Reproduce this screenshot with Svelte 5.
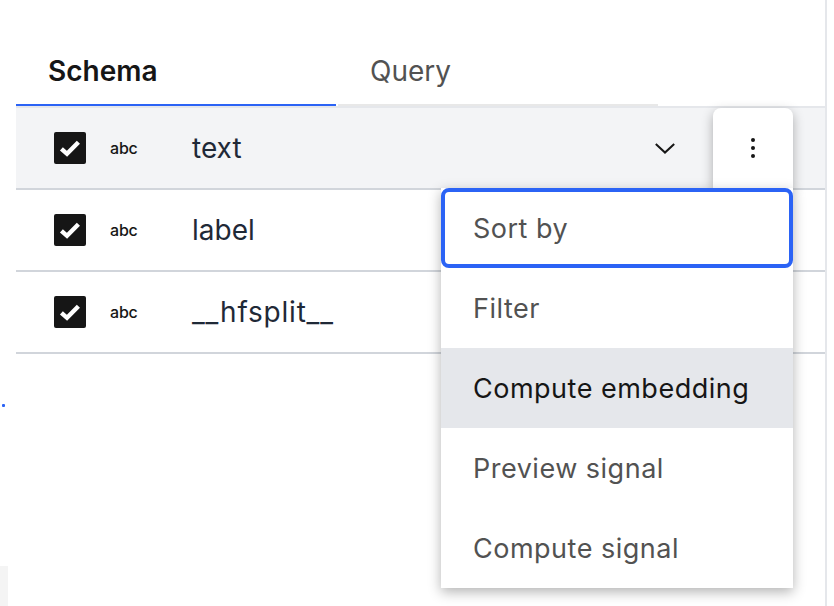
<script lang="ts">
  const rows = ['text', 'label', '__hfsplit__'];
  const menuItems = ['Sort by', 'Filter', 'Compute embedding', 'Preview signal', 'Compute signal'];
  const focused = 'Sort by';
  const hovered = 'Compute embedding';
</script>

<div class="page">
  <span class="stray-dot"></span>
  <span class="corner"></span>
  <div class="panel">
    <div class="tabs">
      <div class="tab active">Schema</div>
      <div class="tab">Query</div>
    </div>

    <div class="rows">
      {#each rows as name, i}
        <div class="row" class:open={i === 0}>
          <span class="checkbox">
            <svg viewBox="0 0 32 32" width="32" height="32">
              <path d="M7.4 16.8l5.6 5 11.4-11.6" fill="none" stroke="#fff" stroke-width="4.4" />
            </svg>
          </span>
          <span class="type">abc</span>
          <span class="name" class:dunder={name.startsWith('__')}>{name}</span>
          {#if i === 0}
            <svg class="chevron" viewBox="0 0 20 11" width="20" height="11">
              <path d="M.8 1l9.2 8.6L19.200 1" fill="none" stroke="#161616" stroke-width="2" />
            </svg>
          {/if}
        </div>
      {/each}

      <div class="overflow">
        <button class="trigger" aria-label="Options">
          <svg viewBox="0 0 6 22" width="6" height="22">
            <circle cx="3" cy="3" r="2" fill="#161616" />
            <circle cx="3" cy="11" r="2" fill="#161616" />
            <circle cx="3" cy="19" r="2" fill="#161616" />
          </svg>
        </button>
        <ul class="menu">
          {#each menuItems as item}
            <li class:focused={item === focused} class:hovered={item === hovered}>{item}</li>
          {/each}
        </ul>
      </div>
    </div>
  </div>
</div>

<style>
  :global(body) {
    background: #fff;
    overflow: hidden;
  }
  .page {
    position: relative;
    width: 834px;
    height: 606px;
    box-sizing: border-box;
    padding: 40px 9px 0 16px;
    overflow: hidden;
    font-family: Inter, "Liberation Sans", sans-serif;
    color: #161616;
  }
  .page::after {
    content: '';
    position: absolute;
    top: 0;
    right: 7px;
    bottom: 0;
    width: 2px;
    background: #e5e7eb;
  }
  .stray-dot {
    position: absolute;
    left: 2px;
    top: 404px;
    width: 3px;
    height: 3px;
    border-radius: 1px;
    background: #2b63f5;
  }
  .corner {
    position: absolute;
    left: 0;
    top: 566px;
    width: 8px;
    height: 40px;
    background: #f4f4f4;
  }
  .tabs {
    display: flex;
    gap: 2px;
    height: 66px;
  }
  .tab {
    width: 320px;
    box-sizing: border-box;
    padding: 13px 32px 0;
    height: 66px;
    font-size: 28px;
    line-height: 36px;
    color: #525252;
    border-bottom: 2px solid #e8e8e8;
  }
  .tab.active {
    color: #161616;
    font-weight: 600;
    border-bottom-color: #2b63f5;
  }
  .rows {
    position: relative;
    border-top: 2px solid #e5e7eb;
  }
  .row {
    display: flex;
    align-items: center;
    height: 82px;
    box-sizing: border-box;
    padding: 0 150px 0 38px;
    border-bottom: 2px solid #d1d5db;
  }
  .row.open {
    background: #f3f4f6;
  }
  .checkbox {
    display: flex;
    width: 32px;
    height: 32px;
    border-radius: 2px;
    background: #161616;
    flex: none;
  }
  .type {
    width: 28px;
    margin-left: 24px;
    font-size: 16px;
    font-weight: 500;
    letter-spacing: -0.2px;
    flex: none;
  }
  .name {
    margin-left: 54px;
    font-size: 28px;
    line-height: 36px;
    color: #1f2937;
  }
  .name.dunder {
    letter-spacing: 0.8px;
  }
  .chevron {
    margin-left: auto;
  }
  .overflow {
    position: absolute;
    top: 0;
    right: 32px;
    width: 352px;
    z-index: 2;
  }
  .trigger {
    display: flex;
    align-items: center;
    justify-content: center;
    width: 80px;
    height: 80px;
    margin-left: auto;
    padding: 0;
    border: 0;
    border-radius: 8px 8px 0 0;
    background: #fff;
    box-shadow: 0 4px 12px rgba(0, 0, 0, 0.3);
  }
  .menu {
    position: relative;
    margin: 0;
    padding: 0;
    list-style: none;
    background: #fff;
    box-shadow: 0 4px 12px rgba(0, 0, 0, 0.3);
  }
  .menu li {
    height: 80px;
    box-sizing: border-box;
    padding: 0 32px;
    font-size: 27px;
    line-height: 82px;
    letter-spacing: 0.5px;
    color: #525252;
  }
  .menu li.focused {
    line-height: 74px;
    padding-left: 28px;
    border: 4px solid #2b63f5;
    border-radius: 8px;
  }
  .menu li.hovered {
    background: #e5e7eb;
    color: #161616;
  }
</style>
